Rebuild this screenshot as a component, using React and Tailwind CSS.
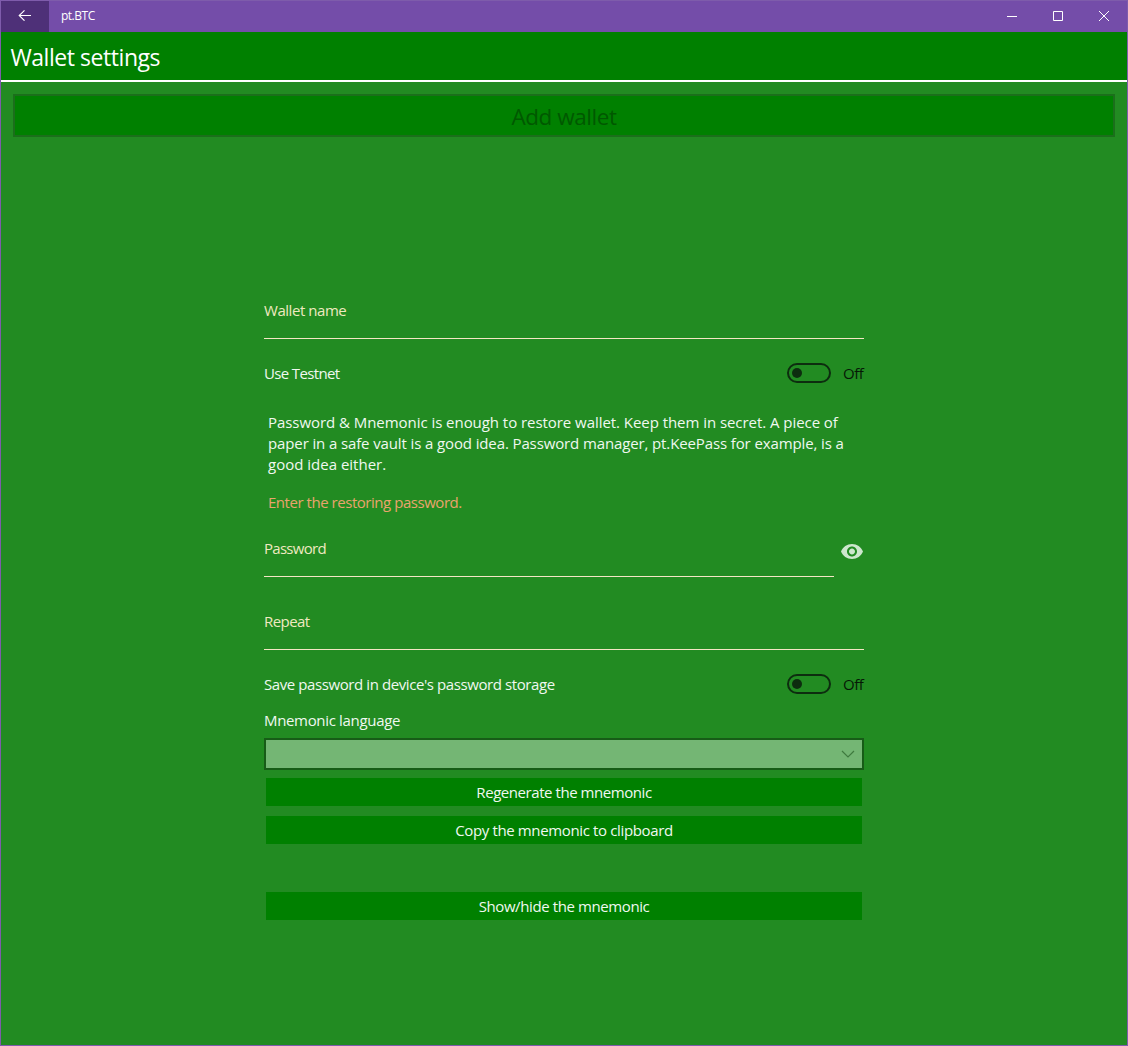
function Field({ label, className = "", labelClass }) {
  return (
    <div className={`h-[39px] border-b border-[#f5e6c4] text-[#efe9c0] ${className}`}>
      <label className={`block leading-[21px] ${labelClass}`}>{label}</label>
    </div>
  );
}

function ToggleRow({ label, className = "", labelClass }) {
  return (
    <div className={`flex h-5 items-start ${className}`}>
      <span className={`grow leading-[21px] ${labelClass}`}>{label}</span>
      <button className="flex h-5 w-11 items-center rounded-full border-2 border-[#0d2d0f] pl-[3px]">
        <span className="size-[10px] rounded-full bg-[#0d2d0f]" />
      </button>
      <span className="ml-3 w-[21px] whitespace-nowrap leading-[21px] tracking-[-0.5px] text-[#061806]">Off</span>
    </div>
  );
}

function ActionButton({ children, className = "", textClass }) {
  return (
    <button className={`mx-[2px] h-7 bg-[#008000] text-center leading-[29px] ${className}`}>
      <span className={textClass}>{children}</span>
    </button>
  );
}

export default function App() {
  return (
    <div className="flex h-[1046px] w-[1128px] flex-col overflow-hidden border border-[#7e5cab] bg-[#228b22] font-['Open_Sans',sans-serif] text-[15px] text-[#f0f8f0]">
      <header className="flex h-[31px] shrink-0 bg-[#744da9] text-white">
        <button className="flex w-12 items-center justify-center bg-[#4e3078] pb-[3px]">
          <svg width="14" height="12" viewBox="0 0 14 12" fill="none" stroke="currentColor" strokeWidth="1.1">
            <path d="M13 6.5H1.5M6.5 1.3L1.2 6.5l5.3 5.2" />
          </svg>
        </button>
        <span className="ml-3 grow text-xs leading-[30px] tracking-[-0.5px]">pt.BTC</span>
        <div className="flex [&>svg]:h-[31px] [&>svg]:w-[46px]">
          <svg viewBox="0 0 46 31" fill="none" stroke="currentColor"><path d="M18 15.5h10" /></svg>
          <svg viewBox="0 0 46 31" fill="none" stroke="currentColor"><path d="M18.5 10.5h9v9h-9z" /></svg>
          <svg viewBox="0 0 46 31" fill="none" stroke="currentColor"><path d="M18 10l10 10M28 10L18 20" /></svg>
        </div>
      </header>
      <h1 className="h-[50px] shrink-0 border-b-2 border-white bg-[#008000] pl-[9.5px] text-[23px] leading-[51px] tracking-[-0.45px] text-white">
        Wallet settings
      </h1>
      <main className="flex flex-col items-center px-3 pt-3">
        <button className="h-[43px] w-full border-2 border-[#1b6f1b] bg-[#008000] text-[22.5px] leading-[41px] tracking-[-0.45px] text-[#005800]">
          Add wallet
        </button>
        <form className="mt-[163px] flex w-[600px] flex-col">
          <Field label="Wallet name" labelClass="tracking-[-0.45px]" />
          <ToggleRow label="Use Testnet" className="mt-6" labelClass="tracking-[-0.65px]" />
          <div className="mt-[29px] pl-1 leading-[21px]">
            <p>
              <span className="tracking-[-0.05px]">Password &amp; Mnemonic is enough to restore wallet. Keep them in secret. A piece of</span><br />
              <span className="tracking-[-0.12px]">paper in a safe vault is a good idea. Password manager, pt.KeePass for example, is a</span><br />
              good idea either.
            </p>
            <p className="mt-[17px] h-5 leading-[21px] tracking-[-0.46px] text-[#e9a46d]">Enter the restoring password.</p>
          </div>
          <div className="mt-[26px] flex">
            <Field label="Password" className="w-[570px]" labelClass="tracking-[-0.72px]" />
            <svg className="ml-[7px] mt-[6px]" width="22" height="15" viewBox="1 4.5 22 15" fill="#cde7cd">
              <path d="M12 4.5C7 4.5 2.73 7.61 1 12c1.73 4.39 6 7.5 11 7.5s9.27-3.11 11-7.5c-1.73-4.39-6-7.5-11-7.5zM12 17c-2.76 0-5-2.24-5-5s2.24-5 5-5 5 2.24 5 5-2.24 5-5 5zm0-8c-1.66 0-3 1.34-3 3s1.34 3 3 3 3-1.34 3-3-1.34-3-3-3z" />
            </svg>
          </div>
          <Field label="Repeat" className="mt-[34px]" labelClass="tracking-[-0.55px]" />
          <ToggleRow label="Save password in device's password storage" className="mt-6" labelClass="tracking-[-0.41px]" />
          <label className="mt-4 h-5 leading-[21px] tracking-[-0.33px]">Mnemonic language</label>
          <div className="mt-2 flex h-8 items-center justify-end border-2 border-[#175c17] bg-[#74b674] pr-[7px]">
            <svg width="14" height="8" viewBox="0 0 14 8" fill="none" stroke="#3f7a3f" strokeWidth="1.2">
              <path d="M1 1l6 6 6-6" />
            </svg>
          </div>
          <ActionButton className="mt-2" textClass="tracking-[-0.44px]">Regenerate the mnemonic</ActionButton>
          <ActionButton className="mt-[10px]" textClass="tracking-[-0.36px]">Copy the mnemonic to clipboard</ActionButton>
          <ActionButton className="mt-12" textClass="tracking-[-0.4px]">Show/hide the mnemonic</ActionButton>
        </form>
      </main>
    </div>
  );
}
